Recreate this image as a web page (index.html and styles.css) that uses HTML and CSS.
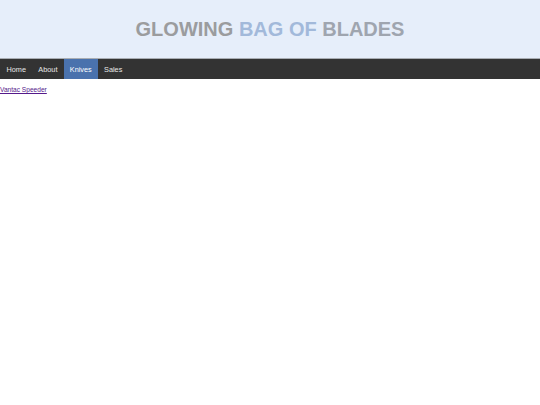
FILE: index.html
```html
<!DOCTYPE html>
<html>
<head>
<meta charset="utf-8">
<link rel="stylesheet" href="styles.css">
</head>
<body>
<header class="banner">
  <h1 class="title"><span class="t-gray">GLOWING</span> <span class="t-blue">BAG OF</span> <span class="t-slate">BLADES</span></h1>
</header>
<nav class="nav">
  <a class="nav-item" href="#">Home</a>
  <a class="nav-item" href="#">About</a>
  <a class="nav-item active" href="#">Knives</a>
  <a class="nav-item" href="#">Sales</a>
</nav>
<main class="content">
  <a class="product" href="">Vantac Speeder</a>
</main>
</body>
</html>
```
FILE: styles.css
```css
html, body {
  margin: 0;
  padding: 0;
  background: #ffffff;
  font-family: "Liberation Sans", Arial, sans-serif;
}
.banner {
  height: 58px;
  background: #e6eefa;
  border-bottom: 1px solid #a9adb3;
  display: flex;
  align-items: center;
  justify-content: center;
}
.title {
  margin: 0;
  font-size: 20px;
  font-weight: bold;
  letter-spacing: 0;
  line-height: 1;
}
.t-gray { color: #9b9c9e; }
.t-blue { color: #a2b9da; }
.t-slate { color: #9fa5af; }
.nav {
  display: flex;
  height: 20px;
  background: #333333;
}
.nav-item {
  display: flex;
  align-items: center;
  padding: 0 6.2px;
  font-size: 7.3px;
  color: #e8e8e8;
  text-decoration: none;
}
.nav-item:first-child { padding-left: 6.5px; }
.nav-item.active {
  background: #4a72ad;
  color: #ffffff;
}
.content {
  padding-top: 7px;
  font-size: 6.6px;
  line-height: 8px;
}
.product {
  display: inline-block;
  color: #551a8b;
  text-decoration: underline;
}
```
